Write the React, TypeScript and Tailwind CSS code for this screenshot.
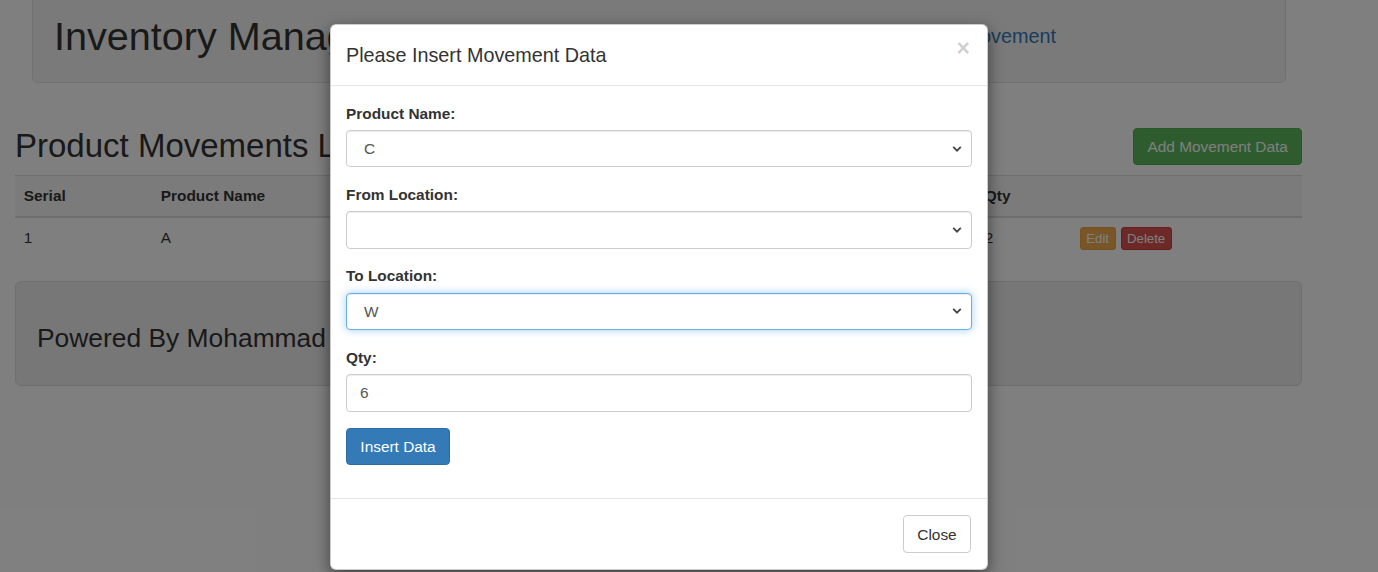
import React from 'react';

const font = { fontFamily: '"Liberation Sans", Arial, sans-serif' };

const Chevron: React.FC = () => (
  <svg className="absolute right-[9px] top-1/2 -translate-y-1/2" width="10" height="7" viewBox="0 0 10 7" fill="none">
    <path d="M1.2 1.4 L5 5.2 L8.8 1.4" stroke="#444" strokeWidth="1.8" />
  </svg>
);

const SelectField: React.FC<{ label: string; value: string; focused?: boolean }> = ({ label, value, focused }) => (
  <div className="mb-[16.5px]">
    <label className="block mb-[5.5px] font-bold leading-[22px] text-[15.4px] text-[#333]">{label}</label>
    <div
      className={
        'relative h-[37.4px] rounded-[4px] border bg-white flex items-center pl-[17px] text-[15.4px] text-[#555] ' +
        (focused
          ? 'border-[#66afe9] shadow-[inset_0_1px_1px_rgba(0,0,0,0.075),0_0_8px_rgba(102,175,233,0.6)]'
          : 'border-[#ccc] shadow-[inset_0_1px_1px_rgba(0,0,0,0.075)]')
      }
    >
      {value}
      <Chevron />
    </div>
  </div>
);

const cell = 'px-[8.8px] py-[8.8px] leading-[22px]';

export default function App() {
  return (
    <div className="relative w-[1378px] h-[572px] overflow-hidden bg-white text-[#333] text-[15.4px]" style={font}>
      {/* page behind the modal */}
      <div className="ml-[32px] w-[1254px] -mt-[20px] h-[103px] rounded-[6px] border border-[#e3e3e3] bg-[#f5f5f5] flex items-center pt-[10px] pl-[21px] pr-[229px]">
        <h1 className="text-[39.6px] leading-none">Inventory Management</h1>
        <div className="ml-auto flex gap-[30px] text-[19.8px] text-[#337ab7]">
          <span>Products</span>
          <span>Locations</span>
          <span>Movement</span>
        </div>
      </div>

      <div className="ml-[15px] w-[1287px]">
        <div className="mt-[45px] flex justify-between items-start">
          <h2 className="text-[33px] leading-[36px]">Product Movements List</h2>
          <button className="h-[37.4px] px-[13.2px] rounded-[4px] border border-[#4cae4c] bg-[#5cb85c] text-white text-[15.4px]">
            Add Movement Data
          </button>
        </div>

        <table className="mt-[10px] w-full border-collapse text-left">
          <thead>
            <tr className="bg-[#f7f7f7] border-t border-[#ddd] border-b-2">
              <th className={`w-[137px] ${cell}`}>Serial</th>
              <th className={`w-[330px] ${cell}`}>Product Name</th>
              <th className={`w-[250px] ${cell}`}>From Location</th>
              <th className={`w-[244px] ${cell}`}>To Location</th>
              <th className={`w-[95px] ${cell}`}>Qty</th>
              <th className={cell}></th>
            </tr>
          </thead>
          <tbody>
            <tr>
              <td className={cell}>1</td>
              <td className={cell}>A</td>
              <td className={cell}>W</td>
              <td className={cell}>X</td>
              <td className={cell}>2</td>
              <td className={cell}>
                <div className="flex gap-[5px]">
                  <span className="h-[23px] px-[5.5px] rounded-[3px] border border-[#eea236] bg-[#f0ad4e] text-white text-[13.2px] leading-[21px]">Edit</span>
                  <span className="h-[23px] px-[5.5px] rounded-[3px] border border-[#d43f3a] bg-[#d9534f] text-white text-[13.2px] leading-[21px]">Delete</span>
                </div>
              </td>
            </tr>
          </tbody>
        </table>

        <div className="mt-[22px] h-[105px] rounded-[6px] border border-[#ddd] bg-[#eee] flex items-center pl-[21px] pt-[10px]">
          <h3 className="text-[26.4px] leading-none">Powered By Mohammad Alzuabi</h3>
        </div>
      </div>

      {/* backdrop */}
      <div className="absolute inset-0 bg-black/50" />

      {/* modal */}
      <div className="absolute left-[330px] top-[24px] w-[658px] rounded-[6px] bg-white border border-black/20 shadow-[0_5px_15px_rgba(0,0,0,0.5)]">
        <div className="relative h-[61px] border-b border-[#e5e5e5] px-[15px] flex items-center">
          <h4 className="text-[19.8px] text-[#333] leading-[28px]">Please Insert Movement Data</h4>
          <span className="absolute right-[17px] top-[12px] text-[23px] font-bold text-black/20 leading-[23px]">×</span>
        </div>
        <div className="px-[15px] pt-[16.5px] pb-[33px]">
          <SelectField label="Product Name:" value="C" />
          <SelectField label="From Location:" value="" />
          <SelectField label="To Location:" value="W" focused />
          <div className="mb-[16.5px]">
            <label className="block mb-[5.5px] font-bold leading-[22px] text-[15.4px] text-[#333]">Qty:</label>
            <div className="h-[37.4px] rounded-[4px] border border-[#ccc] shadow-[inset_0_1px_1px_rgba(0,0,0,0.075)] flex items-center pl-[13px] text-[15.4px] text-[#555]">
              6
            </div>
          </div>
          <button className="h-[37.4px] w-[104px] rounded-[4px] border border-[#2e6da4] bg-[#337ab7] text-white text-[15.4px]">
            Insert Data
          </button>
        </div>
        <div className="border-t border-[#e5e5e5] px-[16px] pt-[16px] pb-[16px] flex justify-end">
          <button className="h-[37.4px] w-[68px] rounded-[4px] border border-[#ccc] bg-white text-[#333] text-[15.4px]">
            Close
          </button>
        </div>
      </div>
    </div>
  );
}
